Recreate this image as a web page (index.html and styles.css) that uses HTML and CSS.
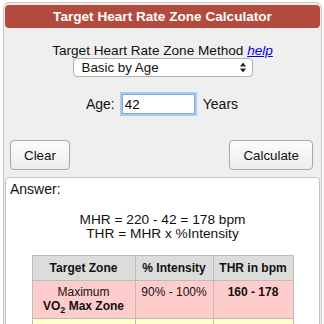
FILE: index.html
```html
<!DOCTYPE html>
<html lang="en">
<head>
  <meta charset="UTF-8" />
  <title>Target Heart Rate Zone Calculator</title>
  <link rel="stylesheet" href="styles.css">
</head>
<body>
  <div class="calc">
    <div class="calc-title">Target Heart Rate Zone Calculator</div>

    <div class="method">
      <div class="method-label">Target Heart Rate Zone Method <a href="#" class="help">help</a></div>
      <div class="select">
        <span>Basic by Age</span>
        <svg class="arrows" width="6" height="11" viewBox="0 0 6 11"><path d="M3 0.5 L6 4.5 H0 Z M0 6.5 H6 L3 10.5 Z" fill="#222"/></svg>
      </div>
    </div>

    <div class="age-row">
      <label for="age">Age:</label>
      <input type="text" id="age" value="42">
      <span>Years</span>
    </div>

    <div class="buttons">
      <button class="btn">Clear</button>
      <button class="btn">Calculate</button>
    </div>

    <div class="answer">
      <div class="answer-label">Answer:</div>
      <div class="formula">
        MHR = 220 - 42 = 178 bpm<br>
        THR = MHR x %Intensity
      </div>
      <table class="zones">
        <tr>
          <th class="c1">Target Zone</th>
          <th class="c2">% Intensity</th>
          <th class="c3">THR in bpm</th>
        </tr>
        <tr class="max">
          <td>Maximum<br><b>VO<sub>2</sub> Max Zone</b></td>
          <td>90% - 100%</td>
          <td><b>160 - 178</b></td>
        </tr>
        <tr class="hard">
          <td>Hard<br><b>Anaerobic Zone</b></td>
          <td>80% - 90%</td>
          <td><b>142 - 160</b></td>
        </tr>
      </table>
    </div>
  </div>
</body>
</html>
```

FILE: styles.css
```css
body {
  margin: 0;
  font-family: "Liberation Sans", Arial, sans-serif;
  font-size: 14px;
  color: #111;
  overflow: hidden;
}

.calc {
  margin: 2px 2px 0 3px;
  padding: 2px 1px 0 1px;
  border: 1px solid #c4c4c4;
  border-radius: 6px;
  background: #efefef;
  height: 400px;
}

.calc-title {
  background: #b24b3d;
  color: #fff;
  font-weight: bold;
  font-size: 13.6px;
  text-align: center;
  height: 23px;
  line-height: 23px;
  border-radius: 4px;
}

.method {
  margin-top: 15px;
  text-align: center;
}

.method-label {
  font-size: 13.6px;
  line-height: 15px;
}

.help {
  color: #00e;
  font-style: italic;
}

.select {
  display: flex;
  justify-content: space-between;
  align-items: center;
  box-sizing: border-box;
  width: 180px;
  height: 19px;
  margin: 0 auto;
  padding: 0 6px 0 8px;
  border: 1px solid #b0b0b0;
  border-radius: 4px;
  background: #fff;
  font-size: 13.33px;
}

.age-row {
  display: flex;
  justify-content: center;
  align-items: center;
  margin-top: 17px;
  margin-right: 1px;
}

.age-row input {
  box-sizing: border-box;
  width: 73px;
  height: 20px;
  margin: 0 8px 0 7px;
  padding: 0 2px;
  font: inherit;
  font-size: 13.33px;
  border: 1px solid #7fa7dc;
  box-shadow: 0 0 0 2px #a9cbf3;
  outline: none;
}

.buttons {
  display: flex;
  justify-content: space-between;
  margin-top: 26px;
  padding: 0 7px 0 5px;
}

.btn {
  font: inherit;
  font-size: 13.33px;
  height: 30px;
  padding: 0 13px;
  border: 1px solid #a8a8a8;
  border-radius: 4px;
  background: linear-gradient(#fbfbfb, #ededed);
  color: #111;
}

.answer {
  margin-top: 7px;
  background: #fff;
  border: 1px solid #c4c4c4;
  border-radius: 4px;
  padding: 3px 4px 0 4px;
  height: 300px;
}

.answer-label {
  line-height: 16px;
}

.formula {
  margin-top: 16px;
  text-align: center;
  font-size: 13.7px;
  line-height: 14px;
}

.zones {
  margin: 14px auto 0 auto;
  border-collapse: collapse;
  table-layout: fixed;
  width: 261px;
  font-size: 12px;
  line-height: 14px;
  text-align: center;
}

.zones th,
.zones td {
  border: 1px solid #bcbcbc;
  vertical-align: top;
  padding: 4px 2px 5px 2px;
}

.zones th {
  background: #dcdcdc;
  height: 14px;
  padding: 5px 2px;
  vertical-align: middle;
}

.c1 { width: 98px; }
.c2 { width: 73px; }
.c3 { width: 75px; }

.max td { background: #ffcccc; }
.hard td { background: #ffffcc; }

.zones sub {
  font-size: 9px;
  line-height: 0;
}
```
